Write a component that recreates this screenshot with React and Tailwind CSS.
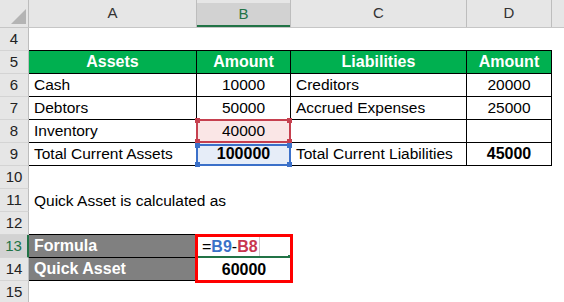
import React from "react";

const F = { fontFamily: '"Liberation Sans", Arial, sans-serif' };

function RowHead({ n, active }) {
  return (
    <div
      className={
        "w-[29px] shrink-0 h-full flex items-center justify-center text-[15px] border-b border-[#d4d4d4] " +
        (active
          ? "bg-[#d2d2d2] text-[#217346] border-r-2 border-r-[#217346]"
          : "bg-[#e6e6e6] text-[#222] border-r border-r-[#bdbdbd]")
      }
    >
      {n}
    </div>
  );
}

function Row({ n, active, children }) {
  return (
    <div className="flex h-[23px]">
      <RowHead n={n} active={active} />
      {children}
    </div>
  );
}

const wA = "w-[168px] shrink-0";
const wB = "w-[94px] shrink-0";
const wC = "w-[176px] shrink-0";
const wD = "w-[85px] shrink-0";
const wE = "flex-1";

function Cell({ w, className = "", children, align = "left" }) {
  const al =
    align === "center" ? "justify-center" : align === "right" ? "justify-end pr-[4px]" : "justify-start pl-[5px]";
  return (
    <div className={`${w} h-full flex items-end pb-[2px] text-[15.5px] leading-[18px] whitespace-nowrap ${al} ${className}`}>
      {children}
    </div>
  );
}

function Handles({ color }) {
  const sq = `absolute w-[5px] h-[5px] ${color}`;
  return (
    <>
      <div className={`${sq} -left-[3px] -top-[3px]`} />
      <div className={`${sq} -right-[3px] -top-[3px]`} />
      <div className={`${sq} -left-[3px] -bottom-[3px]`} />
      <div className={`${sq} -right-[3px] -bottom-[3px]`} />
    </>
  );
}

export default function App() {
  const tb = "border-b border-r border-black";
  const green = "bg-[#00b050] text-white font-bold text-[16px]";
  const bold = "font-bold text-[16px]";
  return (
    <div className="w-[564px] h-[302px] overflow-hidden bg-white text-black" style={F}>
      {/* column header */}
      <div className="flex h-[28px] bg-[#e6e6e6] border-b border-[#c6c6c6] text-[15px] text-[#333]">
        <div className="w-[29px] shrink-0 relative border-r border-[#bdbdbd]">
          <svg className="absolute left-0 top-0" width="29" height="28">
            <polygon points="11,24 26,24 26,9" fill="#b4b4b4" />
          </svg>
        </div>
        <div className={`${wA} flex items-center justify-center border-r border-[#bdbdbd]`}>A</div>
        <div className={`${wB} flex flex-col border-r border-[#bdbdbd]`}>
          <div className="h-[5px]" />
          <div className="flex-1 bg-[#d2d2d2] text-[#217346] flex items-center justify-center border-b-2 border-[#217346]">
            B
          </div>
        </div>
        <div className={`${wC} flex items-center justify-center border-r border-[#bdbdbd]`}>C</div>
        <div className={`${wD} flex items-center justify-center border-r border-[#bdbdbd]`}>D</div>
        <div className={wE} />
      </div>

      <Row n={4}>
        <Cell w={wA} className="border-b border-black" />
        <Cell w={wB} className="border-b border-black" />
        <Cell w={wC} className="border-b border-black" />
        <Cell w={wD} className="border-b border-black" />
        <Cell w={wE} />
      </Row>
      <Row n={5}>
        <Cell w={wA} align="center" className={`${tb} ${green}`}>Assets</Cell>
        <Cell w={wB} align="center" className={`${tb} ${green}`}>Amount</Cell>
        <Cell w={wC} align="center" className={`${tb} ${green}`}>Liabilities</Cell>
        <Cell w={wD} align="center" className={`${tb} ${green}`}>Amount</Cell>
        <Cell w={wE} />
      </Row>
      <Row n={6}>
        <Cell w={wA} className={tb}>Cash</Cell>
        <Cell w={wB} align="center" className={tb}>10000</Cell>
        <Cell w={wC} className={tb}>Creditors</Cell>
        <Cell w={wD} align="center" className={tb}>20000</Cell>
        <Cell w={wE} />
      </Row>
      <Row n={7}>
        <Cell w={wA} className={tb}>Debtors</Cell>
        <Cell w={wB} align="center" className={tb}>50000</Cell>
        <Cell w={wC} className={tb}>Accrued Expenses</Cell>
        <Cell w={wD} align="center" className={tb}>25000</Cell>
        <Cell w={wE} />
      </Row>
      <Row n={8}>
        <Cell w={wA} className={tb}>Inventory</Cell>
        <Cell w={wB} align="center" className={`${tb} relative bg-[#fae6e6]`}>
          <span className="relative z-10">40000</span>
          <div className="absolute -left-px -top-px -right-px -bottom-px border-2 border-[#c6404f] z-10">
            <Handles color="bg-[#c6404f]" />
          </div>
        </Cell>
        <Cell w={wC} className={tb} />
        <Cell w={wD} align="center" className={tb} />
        <Cell w={wE} />
      </Row>
      <Row n={9}>
        <Cell w={wA} className={tb}>Total Current Assets</Cell>
        <Cell w={wB} align="center" className={`${tb} relative bg-[#e6edf8] ${bold}`}>
          <span className="relative z-10">100000</span>
          <div className="absolute -left-px top-px -right-px -bottom-px border-2 border-[#3b70c9] z-10">
            <Handles color="bg-[#3b70c9]" />
          </div>
        </Cell>
        <Cell w={wC} className={tb}>Total Current Liabilities</Cell>
        <Cell w={wD} align="center" className={`${tb} ${bold}`}>45000</Cell>
        <Cell w={wE} />
      </Row>
      <Row n={10}>
        <Cell w={wA} />
        <Cell w={wB} />
        <Cell w={wC} />
        <Cell w={wD} />
        <Cell w={wE} />
      </Row>
      <Row n={11}>
        <Cell w={wA} className="overflow-visible">Quick Asset is calculated as</Cell>
        <Cell w={wB} />
        <Cell w={wC} />
        <Cell w={wD} />
        <Cell w={wE} />
      </Row>
      <Row n={12}>
        <Cell w={wA} className="border-b border-black" />
        <Cell w={wB} />
        <Cell w={wC} />
        <Cell w={wD} />
        <Cell w={wE} />
      </Row>
      <Row n={13} active>
        <Cell w={wA} className={`${tb} bg-[#808080] text-white ${bold}`}>Formula</Cell>
        <Cell w={wB} className="relative pl-[1px]">
          <span className="relative z-10 font-bold text-[16px]">
            <span className="font-normal">=</span>
            <span className="text-[#3a72c8]">B9</span>
            <span className="font-normal">-</span>
            <span className="text-[#c8374f]">B8</span>
          </span>
          <span className="relative z-10 ml-[1px] w-px h-[22px] self-start bg-[#cfcfcf]" />
          <div className="absolute left-px right-[3px] bottom-0 h-[2px] bg-[#217346] z-10" />
          <div className="absolute right-0 bottom-0 w-[3px] h-[3px] bg-[#217346] z-10" />
          <div className="absolute -left-[2px] -top-[1px] w-[98px] h-[49px] border-[3px] border-[#ff0000] z-20" />
        </Cell>
        <Cell w={wC} />
        <Cell w={wD} />
        <Cell w={wE} />
      </Row>
      <Row n={14}>
        <Cell w={wA} className={`${tb} bg-[#808080] text-white ${bold}`}>Quick Asset</Cell>
        <Cell w={wB} align="center" className={bold}>60000</Cell>
        <Cell w={wC} />
        <Cell w={wD} />
        <Cell w={wE} />
      </Row>
      <Row n={15}>
        <Cell w={wA} />
        <Cell w={wB} />
        <Cell w={wC} />
        <Cell w={wD} />
        <Cell w={wE} />
      </Row>
    </div>
  );
}
